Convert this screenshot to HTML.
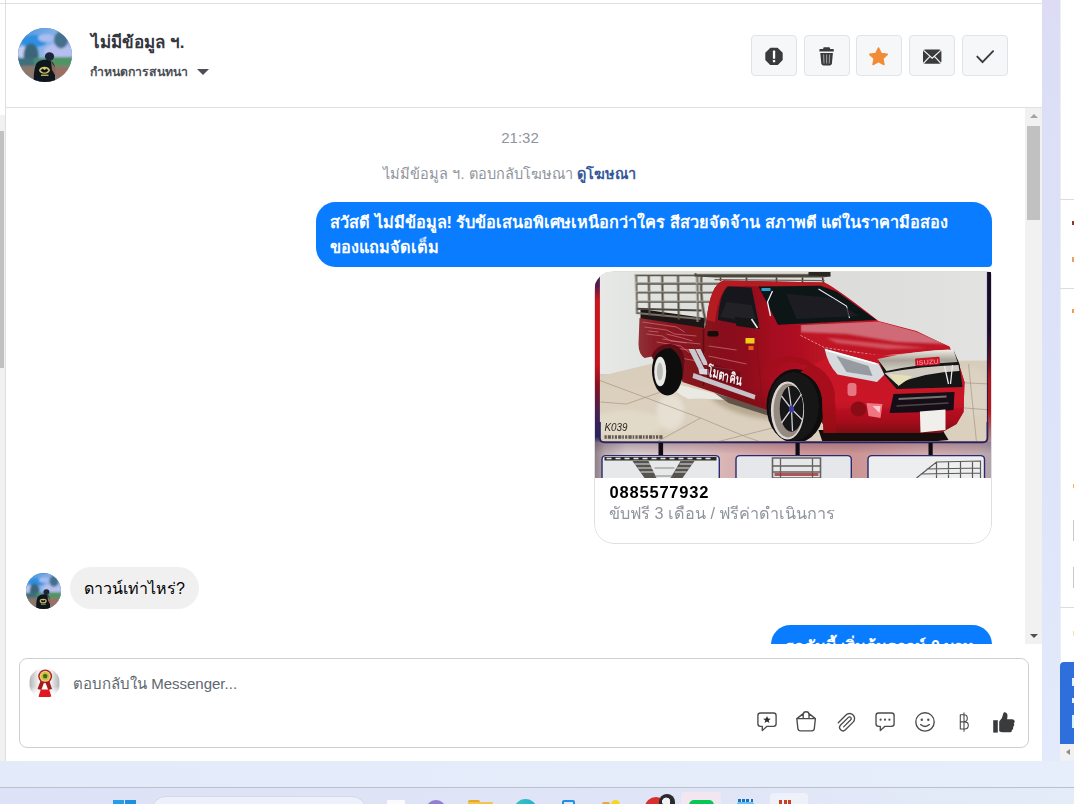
<!DOCTYPE html>
<html lang="th">
<head>
<meta charset="utf-8">
<title>Inbox</title>
<style>
*{box-sizing:border-box;margin:0;padding:0}
html,body{width:1074px;height:804px;overflow:hidden;background:#e3ebf9;font-family:"Liberation Sans",sans-serif;color:#1d2129}
.abs{position:absolute}
#desk{position:absolute;left:0;top:0;width:1074px;height:804px;background:linear-gradient(90deg,#e3ebfa,#e6eefc);overflow:hidden}
#taskbar{position:absolute;left:0;top:787px;width:1074px;height:17px;background:linear-gradient(90deg,#dde2f6,#dfe4f6 60%,#e4ecf8);border-top:1px solid #bcc0cc;overflow:hidden}
#taskbar div{position:absolute}
#main{position:absolute;left:0;top:0;width:1042px;height:761px;background:#fff;overflow:hidden}
#lstrack{position:absolute;left:0;top:115px;width:5px;height:646px;background:#f1f1f1}
#lsthumb{position:absolute;left:0;top:131px;width:4px;height:237px;background:#c1c1c1}
#lborder{position:absolute;left:5px;top:0;width:1px;height:761px;background:#dddfe2}
#topline{position:absolute;left:0;top:3px;width:1042px;height:1px;background:#dddfe2}
#hdrline{position:absolute;left:5px;top:107px;width:1037px;height:1px;background:#dddfe2}
#gutter{position:absolute;left:1042px;top:0;width:18px;height:761px;background:linear-gradient(180deg,#dcddf5,#dde3f8 50%,#e2eafb)}
#rpanel{position:absolute;left:1060px;top:0;width:14px;height:761px;background:#fff;overflow:hidden}
#rpanel div{position:absolute}
.btn{position:absolute;top:35px;width:46px;height:41px;background:#f6f7f8;border:1px solid #e1e3e6;border-radius:4px}
.btn svg{position:absolute;left:0;top:.7px;width:44px;height:40px;overflow:visible}
#name{position:absolute;left:91px;top:30.500px;font-size:17px;font-weight:bold;line-height:24px;white-space:nowrap;color:#33363d}
#sub{position:absolute;left:90px;top:63px;font-size:12.300px;font-weight:bold;line-height:18px;white-space:nowrap;color:#4b4f56}
#caret{position:absolute;left:196.500px;top:69px;width:0;height:0;border-left:6px solid transparent;border-right:6px solid transparent;border-top:6.500px solid #4b4f56}
#chat{position:absolute;left:6px;top:108px;width:1019px;height:536px;overflow:hidden}
#sb{position:absolute;left:1025px;top:108px;width:17px;height:536px;background:#f1f1f1}
#sbthumb{position:absolute;left:2px;top:17.500px;width:13px;height:94.500px;background:#c1c1c1}
#time{position:absolute;left:0;top:128px;width:1040px;text-align:center;font-size:15px;color:#90949c;line-height:20px}
#admeta{position:absolute;left:0;top:165px;width:1019px;text-align:center;font-size:14.500px;color:#90949c;line-height:18px;white-space:nowrap}
#admeta b{color:#365899;font-weight:bold}
#b1{position:absolute;left:316px;top:202px;width:676px;height:65px;background:#0a7cff;border-radius:19.5px 19.5px 4px 19.5px;color:#fff;font-weight:bold;font-size:16.300px;line-height:25px;padding:8px 0 0 14px;overflow:hidden;white-space:nowrap}
#card{position:absolute;left:594px;top:271px;width:398px;height:273px;border-radius:20px 4px 20px 20px;background:#fff;overflow:hidden}
#cardb{position:absolute;left:0;top:0;width:398px;height:273px;border:1px solid #dddfe2;border-radius:20px 4px 20px 20px}
#photo{position:absolute;left:.5px;top:1px;width:396.5px;height:206px;background:#c9cdd0;overflow:hidden}
#photo svg{display:block;width:396.5px;height:206px}
#ctitle{position:absolute;left:15.500px;top:210.500px;font-size:16.500px;font-weight:bold;line-height:20px;color:#000;letter-spacing:.8px}
#csub{position:absolute;left:15px;top:232px;font-size:16.200px;line-height:20px;color:#90949c;white-space:nowrap}
#av2{position:absolute;left:26px;top:573px;width:35px;height:36px;border-radius:50%;background:#4a7fb5;overflow:hidden}
#b2{position:absolute;left:70px;top:567px;width:129px;height:42px;border-radius:21px;background:#f1f0f0;font-size:16px;line-height:44px;padding-left:14px;color:#000;white-space:nowrap;overflow:hidden}
#b3{position:absolute;left:771px;top:625px;width:221px;height:40px;background:#0a7cff;border-radius:19.5px 19.5px 4px 19.5px;color:#fff;font-weight:bold;font-size:16px;line-height:25px;padding:9px 14px 0;white-space:nowrap;overflow:hidden}
#clip{position:absolute;left:0;top:108px;width:1025px;height:536px;overflow:hidden}
#clip>div{position:absolute;left:0;top:-108px;width:1025px;height:804px}
#inbox{position:absolute;left:19px;top:658px;width:1010px;height:90px;border:1px solid #ccd0d5;border-radius:8px;background:#fff}
#ph{position:absolute;left:53px;top:15px;font-size:15px;color:#606770;line-height:20px;white-space:nowrap}
#av3{position:absolute;left:9px;top:9px;width:31px;height:30px;border-radius:50%;background:#fff;overflow:hidden}
#av1{position:absolute;left:18px;top:28px;width:54px;height:54px;border-radius:50%;background:#4a7fb5;overflow:hidden}
</style>
</head>
<body>
<div id="desk">
  <div id="taskbar">
    <div style="left:112.500px;top:12px;width:11px;height:6px;background:#2a9be6"></div><div style="left:124.500px;top:12px;width:11px;height:6px;background:#1f8fe0"></div>
    <div style="left:151px;top:8px;width:216px;height:30px;border-radius:15px;background:#eef1fb;border:1px solid #d3d8ea"></div>
    <div style="left:386.500px;top:12px;width:18px;height:8px;background:#fbfbfd;border-radius:1px"></div>
    <div style="left:426px;top:11.500px;width:19.500px;height:20px;border-radius:50%;background:#8f80d2"></div>
    <div style="left:468px;top:11.500px;width:12px;height:8px;background:#e3a92c;border-radius:2px 2px 0 0"></div><div style="left:468px;top:13.500px;width:24.500px;height:8px;background:#f3c64a;border-radius:1px"></div>
    <div style="left:513.500px;top:10.500px;width:23px;height:23px;border-radius:50%;background:linear-gradient(90deg,#35c9b8,#27a9d8)"></div>
    <div style="left:562px;top:12px;width:13px;height:10px;border:2px solid #2190e2;border-radius:2px"></div>
    <div style="left:602px;top:13.500px;width:8px;height:6px;background:#e9a648;border-radius:2px"></div><div style="left:611px;top:11.500px;width:9px;height:9px;border-radius:50%;background:#f6d524"></div>
    <div style="left:645px;top:9px;width:22px;height:20px;border-radius:50%;background:#d7312f"></div><div style="left:658.500px;top:6px;width:16.500px;height:16.500px;border-radius:50%;background:radial-gradient(circle at 45% 45%,#f2f2f2 0 30%,#2a2a2e 34% 100%)"></div>
    <div style="left:681px;top:4px;width:40px;height:20px;border-radius:4px 4px 0 0;background:#f2e7f0"></div>
    <div style="left:689px;top:11.500px;width:24.500px;height:20px;border-radius:5px;background:#08c755"></div>
    <div style="left:737px;top:13.500px;width:17px;height:8px;background:#63c3f1;border-radius:2px"></div><div style="left:738px;top:10.500px;width:15px;height:3.500px;background:repeating-linear-gradient(90deg,#1d6fc2 0 2.500px,transparent 2.500px 4.200px)"></div>
    <div style="left:770px;top:4.500px;width:38px;height:20px;border-radius:4px 4px 0 0;background:#eef1fa"></div>
    <div style="left:779px;top:12px;width:12px;height:8px;background:repeating-linear-gradient(90deg,#c9421f 0 3px,transparent 3px 4.500px)"></div>
  </div>
  <div id="main">
    <div id="topline"></div>
    <div id="lstrack"></div><div id="lsthumb"></div><div id="lborder"></div>
    <div id="hdrline"></div>
    <div id="av1"><svg viewBox="0 0 54 54" width="100%" height="100%"><defs><linearGradient id="a1sky" x1="0" x2="1" y1="0" y2="1"><stop offset="0" stop-color="#3f93dc"/><stop offset=".45" stop-color="#8fb4ea"/><stop offset="1" stop-color="#b9c2ee"/></linearGradient><filter id="a1bl2" x="-10%" y="-10%" width="120%" height="120%"><feGaussianBlur stdDeviation=".5"/></filter><filter id="a1bl" x="-10%" y="-10%" width="120%" height="120%"><feGaussianBlur stdDeviation="1.300"/></filter></defs><rect width="54" height="54" fill="url(#a1sky)"/><g filter="url(#a1bl)"><ellipse cx="16" cy="13" rx="13" ry="6" fill="#2f8fe0"/><ellipse cx="40" cy="24" rx="14" ry="8" fill="#b6c0f0"/><ellipse cx="28" cy="10" rx="8" ry="4" fill="#a9bdf0"/><ellipse cx="4" cy="24" rx="5" ry="6" fill="#c3cdf2"/><ellipse cx="13" cy="27" rx="7.500" ry="11.500" fill="#3b6579"/><ellipse cx="43" cy="12" rx="7" ry="8.500" fill="#44708c"/><rect x="-2" y="30" width="58" height="9" fill="#4b8a72"/><rect x="34" y="29" width="22" height="9" fill="#4f9463"/><rect x="-2" y="30" width="18" height="9" fill="#3e6f7a"/><rect x="-2" y="38" width="58" height="18" fill="#8d776b"/><ellipse cx="46" cy="45" rx="10" ry="5" fill="#9a6f62"/></g><g filter="url(#a1bl2)"><ellipse cx="31.500" cy="28.500" rx="4.600" ry="4.200" fill="#1b2638"/><path d="M18,36 Q22,31 30,32 Q36,33 37,40 L37,56 L16,56 Q15,44 18,36 Z" fill="#10151f"/><path d="M33,33 L38,41 L37,47 L34,42 Z" fill="#8a6a5c"/><ellipse cx="26.500" cy="42.300" rx="5.400" ry="3.500" fill="#d6c468"/><path d="M22.500,42.500 L24.500,40.500 L26.500,42 L28.500,40.500 L30.500,42.500 L28,44.400 L25,44.400 Z" fill="#10151f"/><rect x="23" y="46.600" width="7.500" height="1.300" fill="#cdbb62"/></g></svg></div>
    <div id="name">ไม่มีข้อมูล ฯ.</div>
    <div id="sub">กำหนดการสนทนา</div><div id="caret"></div>
    <div class="btn" style="left:751px"><svg viewBox="0 0 44 40"><path d="M18.700,11.400 L25.300,11.400 L30,16.100 L30,22.700 L25.300,27.400 L18.700,27.400 L14,22.700 L14,16.100 Z" fill="#3a3b3d" stroke="#3a3b3d" stroke-width="1.400" stroke-linejoin="round"/><rect x="20.900" y="13.600" width="2.300" height="8.200" rx=".6" fill="#fff"/><rect x="20.900" y="23" width="2.300" height="2.300" rx=".6" fill="#fff"/></svg></div>
    <div class="btn" style="left:804px"><svg viewBox="0 0 44 40"><path d="M18.200,11.200 Q18.200,10.300 19.200,10.300 L24,10.300 Q25,10.300 25,11.200 L25,12 L28,12 Q28.800,12 28.800,12.800 L28.800,14.600 L14.400,14.600 L14.400,12.800 Q14.400,12 15.200,12 L18.200,12 Z" fill="#3a3b3d"/><path d="M15.300,15.900 L27.900,15.900 L26.900,26.600 Q26.700,28.400 25,28.400 L18.200,28.400 Q16.500,28.400 16.300,26.600 Z" fill="#3a3b3d"/><path d="M18.600,17.500 L19,26.600 M21.600,17.500 L21.600,26.600 M24.600,17.500 L24.200,26.600" stroke="#9a9b9d" stroke-width="1.100" fill="none"/></svg></div>
    <div class="btn" style="left:856px"><svg viewBox="0 0 44 40"><path d="M21.500,11 L24.200,16.500 L30.200,17.300 L25.800,21.500 L26.900,27.500 L21.500,24.600 L16.100,27.500 L17.200,21.500 L12.800,17.300 L18.800,16.500 Z" fill="#f28b36" stroke="#f28b36" stroke-width="1.600" stroke-linejoin="round"/></svg></div>
    <div class="btn" style="left:909px"><svg viewBox="0 0 44 40"><rect x="13" y="12.600" width="18.400" height="14.200" rx="2.200" fill="#3a3b3d"/><path d="M13.600,13.400 L22.200,21.200 L30.800,13.400 M13.600,26.200 L20,19.300 M30.800,26.200 L24.400,19.300" stroke="#f5f6f7" stroke-width="1.200" fill="none"/></svg></div>
    <div class="btn" style="left:962px"><svg viewBox="0 0 44 40"><path d="M14.300,19.600 L19.500,25.200 L30.100,14.200" stroke="#3a3b3d" stroke-width="1.900" fill="none" stroke-linecap="round" stroke-linejoin="round"/></svg></div>
    <div id="time">21:32</div>
    <div id="clip"><div>
      <div id="admeta" style="left:0">ไม่มีข้อมูล ฯ. ตอบกลับโฆษณา <b>ดูโฆษณา</b></div>
      <div id="b1">สวัสดี ไม่มีข้อมูล! รับข้อเสนอพิเศษเหนือกว่าใคร สีสวยจัดจ้าน สภาพดี แต่ในราคามือสอง<br>ของแถมจัดเต็ม</div>
      <div id="card"><div id="cardb"></div>
        <div id="photo"><svg id="psvg" viewBox="0 0 396.5 206" preserveAspectRatio="none">
<defs>
<linearGradient id="gwall" x1="0" x2="1" y1="0" y2="0"><stop offset="0" stop-color="#e9eae8"/><stop offset=".1" stop-color="#e3e5e2"/><stop offset=".3" stop-color="#dcdedb"/><stop offset=".62" stop-color="#dcdddb"/><stop offset="1" stop-color="#e3e4e2"/></linearGradient>
<linearGradient id="gfloor" x1="0" x2="0" y1="0" y2="1"><stop offset="0" stop-color="#d8ccba"/><stop offset=".5" stop-color="#dcd0be"/><stop offset="1" stop-color="#dbd0be"/></linearGradient>
<linearGradient id="gbody" gradientUnits="userSpaceOnUse" x1="42" x2="370" y1="0" y2="0"><stop offset="0" stop-color="#8e3236"/><stop offset=".05" stop-color="#8c1c26"/><stop offset=".2" stop-color="#84121c"/><stop offset=".33" stop-color="#8e101a"/><stop offset=".41" stop-color="#a61020"/><stop offset=".56" stop-color="#b81222"/><stop offset=".8" stop-color="#c61226"/><stop offset="1" stop-color="#c21226"/></linearGradient>
<linearGradient id="gshade" x1="0" x2="0" y1="0" y2="1"><stop offset="0" stop-color="#000" stop-opacity="0"/><stop offset=".6" stop-color="#000" stop-opacity="0"/><stop offset="1" stop-color="#000" stop-opacity=".32"/></linearGradient>
<linearGradient id="gbump" x1="0" x2="0" y1="0" y2="1"><stop offset="0" stop-color="#c61428"/><stop offset=".6" stop-color="#ca1428"/><stop offset=".85" stop-color="#a60e1c"/><stop offset="1" stop-color="#7c0812"/></linearGradient>
<linearGradient id="gband" x1="0" x2="1" y1="0" y2="0"><stop offset="0" stop-color="#8f8088"/><stop offset=".025" stop-color="#b8aaae"/><stop offset=".08" stop-color="#d8cecd"/><stop offset=".25" stop-color="#dcc0c0"/><stop offset=".5" stop-color="#d29a9a"/><stop offset=".65" stop-color="#cc9494"/><stop offset=".85" stop-color="#d4acac"/><stop offset=".97" stop-color="#c2aaae"/><stop offset="1" stop-color="#b0a4ac"/></linearGradient>
<linearGradient id="gbandv" x1="0" x2="0" y1="0" y2="1"><stop offset="0" stop-color="#503050" stop-opacity=".35"/><stop offset=".35" stop-color="#503050" stop-opacity="0"/></linearGradient>
<linearGradient id="gchrome" x1="0" x2="0" y1="0" y2="1"><stop offset="0" stop-color="#f1efe9"/><stop offset=".5" stop-color="#a9a398"/><stop offset="1" stop-color="#d8d4ca"/></linearGradient>
<linearGradient id="glstrip" gradientUnits="userSpaceOnUse" x1="0" x2="0" y1="0" y2="206"><stop offset="0" stop-color="#3a2058"/><stop offset=".07" stop-color="#5a1c48"/><stop offset=".135" stop-color="#cc141c"/><stop offset=".45" stop-color="#cc141c"/><stop offset=".55" stop-color="#8a1020"/><stop offset=".67" stop-color="#4a2050"/><stop offset=".8" stop-color="#28235c"/><stop offset=".835" stop-color="#8a7a84"/><stop offset="1" stop-color="#a89ca2"/></linearGradient>
<linearGradient id="grstrip" gradientUnits="userSpaceOnUse" x1="0" x2="0" y1="0" y2="206"><stop offset="0" stop-color="#140c28"/><stop offset=".28" stop-color="#1c0c28"/><stop offset=".42" stop-color="#5a1024"/><stop offset=".52" stop-color="#b01420"/><stop offset=".68" stop-color="#b81820"/><stop offset=".78" stop-color="#b07078"/><stop offset=".86" stop-color="#aca0a8"/><stop offset="1" stop-color="#aca4ac"/></linearGradient>
<filter id="soft" x="-5%" y="-5%" width="110%" height="110%"><feGaussianBlur stdDeviation=".55"/></filter>
<filter id="soft2" x="-20%" y="-20%" width="140%" height="140%"><feGaussianBlur stdDeviation="2.2"/></filter>
<filter id="soft3" x="-20%" y="-20%" width="140%" height="140%"><feGaussianBlur stdDeviation="1.1"/></filter>
<clipPath id="cmain"><rect x="3" y="0" width="389" height="171"/></clipPath>
<clipPath id="chood"><path d="M204,53 L282,49.500 L319.700,59.700 L353,74.600 L354,79 L286,84 L228,75.600 L204,63.400 Z"/></clipPath>
</defs>
<g transform="translate(1.5,0)">
<g clip-path="url(#cmain)"><g filter="url(#soft)">
<rect x="-2" y="-2" width="398" height="104" fill="url(#gwall)"/>
<polygon points="-2,105.500 54,92 120,90 396,88.500 396,172 -2,172" fill="url(#gfloor)"/>
<g filter="url(#soft2)">
<ellipse cx="30" cy="152" rx="36" ry="14" fill="#e4dccb" opacity=".8"/>
<ellipse cx="74" cy="140" rx="14" ry="18" fill="#e8e2d6" opacity=".85"/>
<ellipse cx="150" cy="134" rx="36" ry="9" fill="#a8987f" opacity=".7" transform="rotate(16 150 134)"/>
<ellipse cx="376" cy="120" rx="16" ry="26" fill="#ded6c8" opacity=".6"/>
</g>
<g stroke="#9c8f7a" stroke-width=".8" opacity=".75" fill="none">
<path d="M2,108 L104,146 M104,146 L60,170 M104,146 L150,165 M30,132 L70,118 M120,170 L200,150 M372,92 L380,170 M350,110 L394,112 M356,135 L394,138 M150,165 L170,172 M4,130 L30,132"/>
</g>
<path d="M222,158 L346,158 L352,168 L330,170 L226,170 Z" fill="#120c0c"/>
<path d="M84,113 L100,117 L128,124 L131,128 L122,127.500 L104,126.500 L92,127 L86,124 L80,120 Z" fill="#ebe9e3"/>
<path d="M118,121 L175,138 L173,144 L132,131 Z" fill="#4c3c36" opacity=".8"/>
<!-- rear rack -->
<path d="M44,37 L108,46 L108,58 L44,49 Z" fill="#1c1513"/>
<g fill="none" stroke="#5a5248" stroke-width="2.100">
<path d="M38.500,3.300 L128,3.300 M39,11.600 L126,11.600 M39,20.500 L122,20.500 M39,29.800 L118,29.800"/>
<path d="M39,36.800 L105,38.500" stroke="#4a443c"/>
<path d="M40,41 L104,47" stroke="#7a7268"/>
<path d="M39.600,2 L40.400,42 M52.200,3 L53,43.500 M65.700,3 L66.500,45 M81.500,3 L82.300,47.500 M100.600,3 L101.400,50"/>
<path d="M104.800,4 Q103.500,30 110,52" stroke-width="2.300"/>
</g>
<g fill="none" stroke="#d6d0c4" stroke-width=".7" opacity=".9">
<path d="M38.500,2.600 L128,2.600 M39,10.900 L126,10.900 M39,19.800 L122,19.800 M39,29.100 L118,29.100 M39,2 L39.800,42 M100,3 L100.800,50"/>
</g>
<!-- roof rack -->
<path d="M98,1.200 L233,1.200 L234,4.600 L226,5.600 L120,5.400 L98,4.400 Z" fill="#4c463e"/><path d="M124,5.400 L124,9 M150,5.400 L150,9.500 M180,5.400 L180,10 M206,5.400 L206,10.500 M226,5.400 L227,11" stroke="#3c362f" stroke-width="1.600"/><path d="M118,7.600 L228,8.600" stroke="#6a6258" stroke-width="1.100"/>
<path d="M100,1.600 L232,1.600" stroke="#cfcabe" stroke-width="1.100"/>
<path d="M212,0 L234,0 L234,4.200 L212,3.600 Z" fill="#2a2522"/>
<!-- body -->
<path d="M43,46 L108,56 L110,48 Q114,12 127,8.500 L228,10.500 Q240,16 282,49 L320,59 L353,75 L362,91 L368,110 L367,140 L360,152 L344,161 L232,161 L225,150 L171,138 L86,110 L80,86 L58,84 L48,86 Q42,82 42,72 Z" fill="url(#gbody)"/>
<path d="M43,46 L108,56 L110,48 L282,49 L320,59 L353,75 L362,91 L368,110 L367,140 L360,152 L344,161 L232,161 L225,150 L171,138 L86,110 L80,86 L58,84 L48,86 Q42,82 42,72 Z" fill="url(#gshade)"/>
<path d="M110,48 Q114,12 127,8.500 L228,10.500 L232,15 L131,14 Q122,22 118.500,50 Z" fill="#b41a24"/>
<!-- bed squiggle decals -->
<g stroke="#cf7880" stroke-width=".9" opacity=".75" fill="none">
<path d="M46,50 L80,55 L88,60 M48,55 L70,58 L78,62 L100,64 M50,62 L66,64 L74,69 L104,72 M60,70 L84,74 L92,80 L108,82 M84,86 L106,90 L112,94 L136,98 M112,74 L140,78 M112,84 L150,92 M52,59 L62,60 M70,62 L86,66 L96,69 M66,67 L90,71 M78,76 L100,79"/>
</g>
<path d="M107,57 L107,114" stroke="#5c0a12" stroke-width="1.200" fill="none"/>
<path d="M160,66 L166,134" stroke="#7a0c16" stroke-width=".8" fill="none" opacity=".7"/>
<!-- side window -->
<path d="M131.500,14.600 L155,15.500 L162.500,52 L159,55.600 L121.500,48 Q123,22 131.500,14.600 Z" fill="#15171b"/>
<path d="M130,30 L155,33 L160,50 L124,45 Z" fill="#23272c" opacity=".8"/>
<!-- windshield -->
<path d="M162,14.600 L224,13.700 L241,20 L280,48 L181.500,52.800 Z" fill="#101317"/>
<path d="M176,19 L171,30 L174,44" stroke="#f2f4f6" stroke-width="1.300" fill="none"/>
<path d="M222,17 L250,34 L253,46" stroke="#e8ecef" stroke-width="1.100" fill="none"/>
<path d="M190,22 L236,26 L262,44 L200,47 Z" fill="#1e2328" opacity=".8"/>
<rect x="165" y="16" width="9" height="3" fill="#2aa0c8"/>
<!-- mirror -->
<path d="M138,45 L160,47 L163,57 L140,54 Z" fill="#151518"/>
<path d="M155,47 L161,56" stroke="#e8e8ea" stroke-width="1.600"/>
<rect x="111" y="59" width="11" height="5.500" rx="2" fill="#16080c"/>
<rect x="149" y="66" width="9" height="5.500" fill="#f2cc1a"/>
<rect x="152" y="74" width="5" height="4" fill="#e8601a"/>
<!-- hood -->
<path d="M204,53 L282,49.500 L319.700,59.700 L353,74.600 L354,79 L286,84 L228,75.600 L204,63.400 Z" fill="#bf1626"/>
<g clip-path="url(#chood)"><g filter="url(#soft3)">
<path d="M204,52 L282,48 L322,59 L350,72 L300,70 L250,62 L204,60 Z" fill="#d8a4aa" opacity=".6"/>
<path d="M230,66 L290,72 L330,76 L290,77 L240,71 Z" fill="#e0858c" opacity=".55"/>
</g></g>
<path d="M286,84 L352,78" stroke="#e6b9a8" stroke-width="1" opacity=".8"/><path d="M204,63.400 L228,75.600 L286,84" stroke="#f0a8b0" stroke-width=".9" fill="none" stroke-dasharray="2.500 1.500" opacity=".85"/>
<!-- decals -->
<path d="M92,77 L98,77 L108,97 L102,97 Z M99,77 L104,77 L112,93 L107,93 Z" fill="#c9c9d0"/>
<path d="M97,101 L159,123 L158,127.500 L96,106 Z" fill="#c5c3c8"/>
<path d="M102,97 L112,97 L113,103 L103,102 Z" fill="#d8d8de"/>
<g transform="translate(110.500,90) skewY(17)"><rect x="0" y="0" width="33.500" height="15.500" fill="#5c0a12" opacity=".6"/>
<text x="0" y="13.500" font-family="Liberation Sans, sans-serif" font-weight="bold" font-size="15" fill="#f5f5f7" textLength="33.500" lengthAdjust="spacingAndGlyphs" font-style="italic">โมตาคิน</text></g>
<!-- rear wheel -->
<ellipse cx="71" cy="98.500" rx="15.500" ry="25" fill="#100e0f"/>
<ellipse cx="63.700" cy="99.500" rx="6" ry="14.800" fill="#e9e9e6"/>
<ellipse cx="63.400" cy="99.500" rx="3" ry="9" fill="#bdbdb8"/>
<path d="M55,84 Q60,72 74,72 Q86,73 88,88 L86,110 Q88,84 74,76 Q62,76 57,88 Z" fill="#5c0a12"/>
<!-- front wheel -->
<ellipse cx="199" cy="134" rx="29" ry="37" fill="#0c090a"/>
<ellipse cx="197" cy="134.500" rx="25.500" ry="34.500" fill="#151415"/>
<ellipse cx="191" cy="138.400" rx="16.600" ry="29" fill="#ddd6d2"/>
<ellipse cx="191.600" cy="138.400" rx="14.600" ry="27" fill="#948a82"/>
<ellipse cx="195" cy="136.700" rx="11.800" ry="23" fill="#141216"/>
<g stroke="#cfcfd4" stroke-width="1.300" fill="none">
<path d="M195,137 L192,115 M195,137 L205,122 M195,137 L206,148 M195,137 L196,159 M195,137 L185,151 M195,137 L185,124"/>
</g>
<ellipse cx="195" cy="137" rx="2.600" ry="3.600" fill="#3a3aa0"/>
<!-- front fender overlay -->
<path d="M204,100 Q222,106 225.500,126 L227,161 L344,161 L360,152 L367,140 L368,110 L362,91 L300,84 L240,80 Z" fill="url(#gbump)"/>
<path d="M204,100 Q222,106 225.500,126 L227,161 L240,161 L238,120 Q234,100 215,92 Z" fill="#9a0c16" opacity=".7"/>
<path d="M166,102 Q172,84 196,84 Q214,86 222,100 L226,108 Q216,92 196,90 Q178,90 171,110 Z" fill="#a40e1a"/>
<!-- headlight -->
<path d="M228,76.500 L282,91.400 L288,102.600 L280.500,110 L241,102.600 Q231,92 228,76.500 Z" fill="#d6dadc"/>
<path d="M240,84 L272,94 L276,104 L250,100 Z" fill="#7f868c" opacity=".75"/>
<path d="M229,78 L280,92" stroke="#ffffff" stroke-width="1.600"/>
<!-- grille -->
<path d="M282,88 L357,78 L363,92 L366,115 L300,117 L288,103 Z" fill="#131215"/>
<path d="M281,87 Q320,78 357,77.500 L361,90 Q322,92 290,99 Z" fill="url(#gchrome)"/>
<path d="M288,101 Q326,94 362,93 L363,99 Q330,100 300,112 Z" fill="#cfcbc0"/>
<path d="M292,102 L302,114 L316,104 Z" fill="#e6dfb8"/>
<rect x="318.700" y="85.600" width="24.600" height="7.800" rx="1" fill="#c41826" transform="rotate(-4 331 89.500)"/>
<text x="320" y="92.300" font-family="Liberation Sans, sans-serif" font-weight="bold" font-size="6.500" fill="#ff7a86" transform="rotate(-4 331 89.500)" textLength="22" lengthAdjust="spacingAndGlyphs">ISUZU</text>
<path d="M348,94 L352,112 M356,93 L354,112" stroke="#e9e9ee" stroke-width="1.300"/>
<!-- lower intake -->
<path d="M297,122 L358,120 L357,138 L332,140 L293,141 Z" fill="#171114"/>
<path d="M302,127 L350,124.500" stroke="#8d8a88" stroke-width="1.800" opacity=".8"/>
<path d="M300,134 L352,131" stroke="#4a4648" stroke-width="1.300"/>
<path d="M323.400,139.500 L349,137.500 L349,158 L324,160.500 Z" fill="#f1efec"/>
<ellipse cx="262" cy="137" rx="8" ry="7.500" fill="#8a0c18"/>
<path d="M270,131 L286,132 L284,146 L272,144 Z" fill="#f07480"/>
<path d="M276,134 L284,134 L283,141 Z" fill="#ffd8dc" opacity=".85"/>
<rect x="251" y="111" width="9" height="13" rx="3" fill="#ee8f99" opacity=".8"/>
<text x="8" y="159" font-family="Liberation Sans, sans-serif" font-style="italic" font-size="10.500" fill="#2a2622" textLength="23" lengthAdjust="spacingAndGlyphs">K039</text>
<path d="M8,165 L66,165" stroke="#2e2822" stroke-width="3.400" stroke-dasharray="2.200 1.100 3.300 .9 1.600 1.200" opacity=".7"/>
</g></g>
</g>
<!-- frame: band, strips, border -->
<rect x="0" y="169" width="396.500" height="37" fill="url(#gband)"/>
<rect x="0" y="169" width="396.500" height="37" fill="url(#gbandv)"/>
<path d="M0,0 L4.900,0 L4.900,165 Q4.900,170 9.500,170 L0,170 Z" fill="url(#glstrip)"/>
<path d="M396.500,0 L392.400,0 L392.400,165 Q392.400,170 388,170 L396.500,170 Z" fill="url(#grstrip)"/>
<path d="M4.900,150 L4.900,166 Q4.900,170.300 9.500,170.300 L388,170.300 Q392.400,170.300 392.400,166 L392.400,150" fill="none" stroke="#27235c" stroke-width="1.800"/>
<path d="M392.400,0 L392.400,150" stroke="#1c1440" stroke-width="1"/>
<g transform="translate(1.500,0)">
<g fill="#0e0c12"><rect x="62" y="171" width="4.600" height="13"/><rect x="199" y="171" width="4.200" height="13"/><rect x="332" y="171" width="4.200" height="13"/></g>
<g stroke="#2a2a72" stroke-width="1.400">
<path d="M5.500,207 L5.500,187.500 Q5.500,183.600 9.500,183.600 L118.800,183.600 Q122.800,183.600 122.800,187.500 L122.800,207 Z" fill="#e6e8ea"/>
<path d="M139.500,207 L139.500,187.500 Q139.500,183.600 143.500,183.600 L250.800,183.600 Q254.800,183.600 254.800,187.500 L254.800,207 Z" fill="#e5e7ea"/>
<path d="M271.500,207 L271.500,187.500 Q271.500,183.600 275.500,183.600 L384,183.600 Q388,183.600 388,187.500 L388,207 Z" fill="#eceeef"/>
</g>
<g filter="url(#soft)">
<path d="M8,185 L120,185 L120,188.500 L8,188.500 Z" fill="#2e2c2a"/>
<path d="M10,186.500 L118,186.500" stroke="#e8e8e8" stroke-width="1.600" stroke-dasharray="5 4"/>
<path d="M36,189 L48,206 L60,206 L52,189 Z M98,189 L86,206 L74,206 L84,189 Z" fill="#55524e"/>
<path d="M38,192 L54,192 M41,196 L56,196 M44,200 L58,200 M96,192 L83,192 M93,196 L80,196 M90,200 L78,200" stroke="#e0e0e0" stroke-width="1"/>
<path d="M58,196 L78,196 M58,204 L76,204" stroke="#8a8782" stroke-width="1.200"/>
<path d="M176,186 L224,186 L224,206 L176,206 Z" fill="none" stroke="#66625c" stroke-width="1.600"/>
<path d="M176,194 L224,194 M176,200 L224,200 M184,186 L184,206 M216,186 L216,206" stroke="#66625c" stroke-width="1.300"/>
<rect x="178" y="201" width="44" height="3" fill="#a0303a" opacity=".8"/>
<path d="M320,206 L340,190 L384,189 L384,206 M330,197 L384,196 M324,202 L384,201 M340,190 L340,206 M352,190 L352,206 M364,190 L364,206 M376,190 L376,206" stroke="#5c5954" stroke-width="1.200" fill="none"/>
</g>
</g>
</svg>
</div>
        <div id="ctitle">0885577932</div>
        <div id="csub">ขับฟรี 3 เดือน / ฟรีค่าดำเนินการ</div>
      </div>
      <div id="av2"><svg viewBox="0 0 54 54" width="100%" height="100%"><defs><linearGradient id="a2sky" x1="0" x2="1" y1="0" y2="1"><stop offset="0" stop-color="#3f93dc"/><stop offset=".45" stop-color="#8fb4ea"/><stop offset="1" stop-color="#b9c2ee"/></linearGradient><filter id="a2bl2" x="-10%" y="-10%" width="120%" height="120%"><feGaussianBlur stdDeviation=".5"/></filter><filter id="a2bl" x="-10%" y="-10%" width="120%" height="120%"><feGaussianBlur stdDeviation="1.300"/></filter></defs><rect width="54" height="54" fill="url(#a2sky)"/><g filter="url(#a2bl)"><ellipse cx="16" cy="13" rx="13" ry="6" fill="#2f8fe0"/><ellipse cx="40" cy="24" rx="14" ry="8" fill="#b6c0f0"/><ellipse cx="28" cy="10" rx="8" ry="4" fill="#a9bdf0"/><ellipse cx="4" cy="24" rx="5" ry="6" fill="#c3cdf2"/><ellipse cx="13" cy="27" rx="7.500" ry="11.500" fill="#3b6579"/><ellipse cx="43" cy="12" rx="7" ry="8.500" fill="#44708c"/><rect x="-2" y="30" width="58" height="9" fill="#4b8a72"/><rect x="34" y="29" width="22" height="9" fill="#4f9463"/><rect x="-2" y="30" width="18" height="9" fill="#3e6f7a"/><rect x="-2" y="38" width="58" height="18" fill="#8d776b"/><ellipse cx="46" cy="45" rx="10" ry="5" fill="#9a6f62"/></g><g filter="url(#a2bl2)"><ellipse cx="31.500" cy="28.500" rx="4.600" ry="4.200" fill="#1b2638"/><path d="M18,36 Q22,31 30,32 Q36,33 37,40 L37,56 L16,56 Q15,44 18,36 Z" fill="#10151f"/><path d="M33,33 L38,41 L37,47 L34,42 Z" fill="#8a6a5c"/><ellipse cx="26.500" cy="42.300" rx="5.400" ry="3.500" fill="#d6c468"/><path d="M22.500,42.500 L24.500,40.500 L26.500,42 L28.500,40.500 L30.500,42.500 L28,44.400 L25,44.400 Z" fill="#10151f"/><rect x="23" y="46.600" width="7.500" height="1.300" fill="#cdbb62"/></g></svg></div>
      <div id="b2">ดาวน์เท่าไหร่?</div>
      <div id="b3">รถคันนี้ เริ่มต้นดาวน์ 0 บาท</div>
    </div></div>
    <div id="sb"><div id="sbthumb"></div><div style="position:absolute;left:4.500px;top:6px;width:0;height:0;border-left:4px solid transparent;border-right:4px solid transparent;border-bottom:4.500px solid #a3a3a3"></div><div style="position:absolute;left:4.500px;bottom:6.500px;width:0;height:0;border-left:4px solid transparent;border-right:4px solid transparent;border-top:4.500px solid #505050"></div></div>
    <svg id="inicons" viewBox="750 706 270 32" width="270" height="32" style="position:absolute;left:750px;top:706px;z-index:5" fill="none" stroke="#4a4b4e" stroke-width="1.350" stroke-linecap="round" stroke-linejoin="round">
<path d="M760.400,713 L773.600,713 Q776.100,713 776.100,715.500 L776.100,723.800 Q776.100,726.300 773.600,726.300 L767,726.300 L762.300,730.600 L762.300,726.300 L760.400,726.300 Q757.900,726.300 757.900,723.800 L757.900,715.500 Q757.900,713 760.400,713 Z"/>
<path d="M767,716 L768.100,718.500 L770.800,718.700 L768.700,720.400 L769.400,723.100 L767,721.600 L764.600,723.100 L765.300,720.400 L763.200,718.700 L765.900,718.500 Z" fill="#2b2d30" stroke="none"/>
<path d="M796.800,718.600 L815.400,718.600 L814.300,728.600 Q814,730.800 811.800,730.800 L800.400,730.800 Q798.200,730.800 797.900,728.600 Z"/>
<path d="M797.200,718.400 L803.200,713.600 M815,718.400 L809,713.600 M803.200,718.400 L803.200,714.400 Q803.200,711.700 806.100,711.700 Q809,711.700 809,714.400 L809,718.400"/>
<g transform="translate(846.200,721.900) rotate(180) scale(.84) translate(-12,-12)"><path d="M21.440,11.050 l-9.190,9.190 a6,6 0 0 1 -8.490,-8.490 l9.190,-9.190 a4,4 0 0 1 5.660,5.660 l-9.200,9.190 a2,2 0 0 1 -2.830,-2.830 l8.490,-8.480" stroke-width="1.600"/></g>
<path d="M878.500,713 L891.600,713 Q894.100,713 894.100,715.500 L894.100,723.800 Q894.100,726.300 891.600,726.300 L885,726.300 L880.300,730.600 L880.300,726.300 L878.500,726.300 Q876,726.300 876,723.800 L876,715.500 Q876,713 878.500,713 Z"/>
<g fill="#4b4f56" stroke="none"><circle cx="880.600" cy="719.700" r="1.100"/><circle cx="885" cy="719.700" r="1.100"/><circle cx="889.400" cy="719.700" r="1.100"/></g>
<circle cx="925" cy="721.900" r="9.200"/>
<g fill="#4b4f56" stroke="none"><circle cx="921.800" cy="719.800" r="1.200"/><circle cx="928.300" cy="719.800" r="1.200"/></g>
<path d="M920.600,724.600 Q925,728.400 929.400,724.600"/>
<path d="M960.300,714.800 L960.300,729 L964.600,729 Q968.300,729 968.300,725.300 Q968.300,721.900 964.600,721.900 L960.300,721.900 M960.300,714.800 L964,714.800 Q967.300,714.800 967.300,718.300 Q967.300,721.900 964,721.900 M964,712.900 L964,731.200" stroke-width="1.100"/>
<g fill="#3a3b3d" stroke="none"><path d="M993.200,720.200 L997.800,720.200 L997.800,732.600 L993.200,732.600 Z"/><path d="M999.200,721.600 Q1002.600,718.600 1003.300,713.500 Q1003.500,712.100 1005,712.300 Q1007.600,712.900 1007.500,716 L1007.100,719.300 L1012.400,719.300 Q1014.800,719.500 1014.700,721.600 Q1014.700,722.900 1013.800,723.400 Q1014.600,724.400 1014.100,725.600 Q1013.800,726.500 1013,726.800 Q1013.600,727.900 1013,728.900 Q1012.600,729.700 1011.800,729.900 Q1012.200,731 1011.400,731.700 Q1010.700,732.300 1009.600,732.300 L1002.600,732.300 Q1000.600,732.300 999.200,731.200 Z"/></g>
</svg>
    <div id="inbox">
      <div id="av3"><svg viewBox="0 0 32 32" width="100%" height="100%"><defs><linearGradient id="mdbg" x1="0" x2="1" y1="0" y2="0"><stop offset="0" stop-color="#b4b4b4"/><stop offset=".3" stop-color="#f2f2f2"/><stop offset=".5" stop-color="#ffffff"/><stop offset=".7" stop-color="#f2f2f2"/><stop offset="1" stop-color="#b4b4b4"/></linearGradient><linearGradient id="mdfade" x1="0" x2="0" y1="0" y2="1"><stop offset="0" stop-color="#fff" stop-opacity="0"/><stop offset=".62" stop-color="#fff" stop-opacity="0"/><stop offset=".88" stop-color="#fff" stop-opacity="1"/><stop offset="1" stop-color="#fff" stop-opacity="1"/></linearGradient><filter id="mdbl"><feGaussianBlur stdDeviation=".45"/></filter></defs><rect width="32" height="32" fill="url(#mdbg)"/><rect width="32" height="32" fill="url(#mdfade)"/><g filter="url(#mdbl)"><path d="M12.500,12 L8.500,22.500 L12.500,23.500 L16,14 Z" fill="#a31a1a"/><path d="M20.500,12 L24,22.500 L20,23.500 L16.500,14 Z" fill="#a31a1a"/><path d="M12,23 L21,23 L23.500,31 L9.500,31 Z" fill="#e01222"/><circle cx="16.700" cy="8.900" r="7.400" fill="#a8201c"/><circle cx="16.700" cy="8.900" r="5.900" fill="#f2c58e"/><circle cx="16.700" cy="8.900" r="4.500" fill="#c9c23e"/><path d="M14.300,7.500 L16.700,6 L19.200,7.500 L18.500,11 L15,11 Z" fill="#3c6a1e"/></g></svg></div>
      <div id="ph">ตอบกลับใน Messenger...</div>
    </div>
  </div>
  <div id="gutter"></div>
  <div id="rpanel">
    <div style="left:0;top:0;width:1px;height:662px;background:#eceef3"></div>
    <div style="left:0;top:199px;width:14px;height:1px;background:#dcdde0"></div>
    <div style="left:0;top:288px;width:14px;height:1px;background:#dcdde0"></div>
    <div style="left:0;top:607px;width:14px;height:1px;background:#dcdde0"></div>
    <div style="left:12px;top:220.500px;width:3px;height:4.500px;background:#8a3a2c"></div>
    <div style="left:12px;top:257px;width:3px;height:4.500px;background:#e5a36a"></div>
    <div style="left:12px;top:308.500px;width:3px;height:4px;background:#eda04a"></div>
    <div style="left:12.500px;top:483.500px;width:2px;height:4px;background:#f0b060"></div>
    <div style="left:12.500px;top:519.500px;width:2px;height:21px;background:#c6c9ce"></div>
    <div style="left:12.500px;top:566.500px;width:2px;height:21px;background:#c6c9ce"></div>
    <div style="left:12.500px;top:631px;width:2px;height:5px;background:#f7e3a0"></div>
    <div style="left:0;top:662px;width:20px;height:82px;background:#2f6fdc;border-radius:4px 0 0 0"></div>
    <div style="left:11.500px;top:677.500px;width:3px;height:8px;background:#e8f0ff"></div>
    <div style="left:11.500px;top:698px;width:3px;height:5px;background:#e8f0ff"></div>
    <div style="left:11.500px;top:715px;width:3px;height:12.500px;background:#d4f2ff"></div>
    <div style="left:0;top:744px;width:14px;height:17px;background:#f1f1f1"></div>
    <div style="left:5.500px;top:749px;width:0;height:0;border-top:3.700px solid transparent;border-bottom:3.700px solid transparent;border-right:4.500px solid #8b8b8b"></div>
  </div>
</div>
</body>
</html>
